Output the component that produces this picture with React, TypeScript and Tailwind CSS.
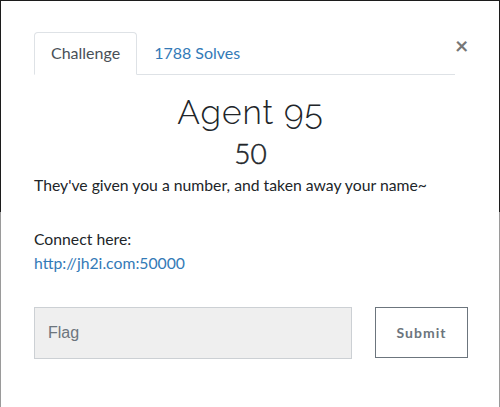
import React from "react";

export default function App() {
  return (
    <div className="w-[500px] h-[407px] overflow-hidden bg-[linear-gradient(to_bottom,#1c1c1c_0px,#1c1c1c_212px,#9a9a9a_212px)] pt-px px-px font-['Lato','Liberation_Sans',sans-serif]">
      <div className="h-[406px] bg-white pl-[33px] pr-[32px] pt-[31px] text-[#212529]">
        <div className="flex items-start">
          <div className="flex flex-1 border-b border-[#dee2e6]">
            <div className="-mb-px border border-[#dee2e6] border-b-white rounded-t-[4px] bg-white px-4 py-2 text-[16px] leading-6 text-[#495057]">
              Challenge
            </div>
            <div className="border border-transparent px-4 py-2 text-[16px] leading-6 text-[#337ab7]">
              1788 Solves
            </div>
          </div>
          <button className="mt-[3px] w-[12px] text-[23px] leading-5 font-bold text-[#777]">×</button>
        </div>
        <div>
          <h3 className="mt-[15px] text-center text-[33.5px] leading-[45px] font-light tracking-[1px] font-['Raleway','Lato',sans-serif]">Agent 95</h3>
          <h4 className="text-center text-[28px] leading-[36px] font-light [-webkit-text-stroke:0.5px_#212529]">50</h4>
          <p className="mt-[2px] text-[15.75px] leading-6">They've given you a number, and taken away your name~</p>
          <p className="mt-[30px] text-[15.75px] leading-6">Connect here:</p>
          <a className="block text-[15.75px] leading-6 text-[#337ab7]">http://jh2i.com:50000</a>
          <div className="mt-[32px] flex items-start">
            <div className="shrink-0 w-[318px] h-[52px] border border-[#ccd0d4] bg-[#efefef] flex items-center pl-[13px] text-[16px] text-[#6c757d] font-['Liberation_Sans',sans-serif]">
              Flag
            </div>
            <button className="shrink-0 ml-[23px] w-[93px] h-[51px] border border-[#6c757d] text-[14px] font-bold tracking-[1px] text-[#6c757d]">
              Submit
            </button>
          </div>
        </div>
      </div>
    </div>
  );
}
